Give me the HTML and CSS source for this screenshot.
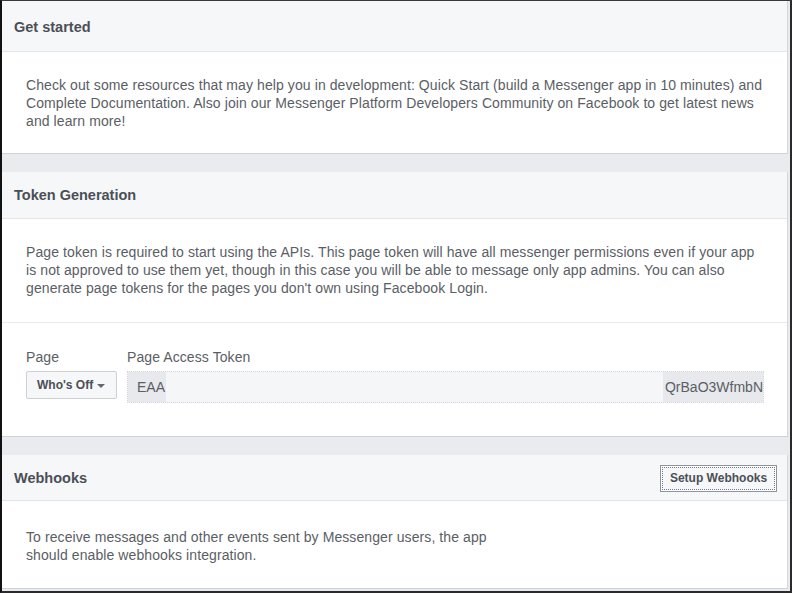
FILE: index.html
```html
<!DOCTYPE html>
<html>
<head>
<meta charset="utf-8">
<link rel="stylesheet" href="styles.css">
</head>
<body>
<div class="frame">
  <section class="card card-first">
    <div class="card-head head-first"><h2 class="card-title">Get started</h2></div>
    <div class="card-body">
      <p class="text">Check out some resources that may help you in development: Quick Start (build a Messenger app in 10 minutes) and Complete Documentation. Also join our Messenger Platform Developers Community on Facebook to get latest news and learn more!</p>
    </div>
  </section>
  <div class="spacer"></div>
  <section class="card">
    <div class="card-head head-second"><h2 class="card-title">Token Generation</h2></div>
    <div class="card-body body-token">
      <p class="text">Page token is required to start using the APIs. This page token will have all messenger permissions even if your app is not approved to use them yet, though in this case you will be able to message only app admins. You can also generate page tokens for the pages you don't own using Facebook Login.</p>
    </div>
    <div class="form-row">
      <div class="field field-page">
        <div class="label">Page</div>
        <button class="select">Who's Off <span class="caret"></span></button>
      </div>
      <div class="field field-token">
        <div class="label">Page Access Token</div>
        <div class="token">
          <span class="token-start">EAA</span>
          <span class="token-mid"></span>
          <span class="token-end">QrBaO3WfmbN</span>
        </div>
      </div>
    </div>
  </section>
  <div class="spacer"></div>
  <section class="card card-last">
    <div class="card-head head-third">
      <h2 class="card-title">Webhooks</h2>
      <button class="btn">Setup Webhooks</button>
    </div>
    <div class="card-body body-last">
      <p class="text">To receive messages and other events sent by Messenger users, the app<br>should enable webhooks integration.</p>
    </div>
  </section>
</div>
</body>
</html>
```
FILE: styles.css
```css
html, body {
  margin: 0;
  padding: 0;
  background: #ffffff;
}
.frame {
  width: 792px;
  height: 593px;
  box-sizing: border-box;
  border-left: 2px solid #111111;
  border-right: 2px solid #2a2a2a;
  border-top: 1px solid #3a3a3a;
  border-bottom: 2px solid #2a2a2a;
  background: #e9ebee;
  overflow: hidden;
  font-family: "Liberation Sans", Arial, sans-serif;
  display: flex;
  flex-direction: column;
}
.card {
  background: #ffffff;
  border-right: 1px solid #d3d6db;
  margin-right: 2px;
  border-bottom: 1px solid #cfd2d7;
}
.card-last {
  flex: 1;
  margin-bottom: 2px;
}
.card-head {
  background: #f6f7f9;
  border-bottom: 1px solid #e2e4e8;
  display: flex;
  align-items: center;
  justify-content: space-between;
  padding: 0 10px 0 12px;
  box-sizing: border-box;
}
.head-first { height: 51px; padding-top: 1px; }
.head-second { height: 47px; }
.head-third { height: 46px; }
.card-title {
  margin: 0;
  font-size: 14.5px;
  font-weight: bold;
  color: #4b4f56;
  line-height: 18px;
}
.card-body {
  padding: 24px 24px 23px 24px;
}
.body-token {
  padding-bottom: 25px;
}
.body-last {
  padding-top: 27px;
}
.text {
  margin: 0;
  font-size: 14px;
  letter-spacing: 0.09px;
  line-height: 18px;
  color: #5a5e65;
}
.spacer {
  height: 18px;
  flex: none;
}
.form-row {
  border-top: 1px solid #e9eaed;
  padding: 25px 23px 33px 24px;
  display: flex;
  gap: 10px;
}
.label {
  font-size: 14px;
  letter-spacing: 0.09px;
  line-height: 18px;
  color: #5a5e65;
  margin-bottom: 5px;
}
.select {
  height: 28px;
  width: 91px;
  box-sizing: border-box;
  background: #f6f7f9;
  border: 1px solid #ced0d4;
  border-radius: 2px;
  font-family: "Liberation Sans", Arial, sans-serif;
  font-size: 12px;
  font-weight: bold;
  color: #4b4f56;
  padding: 0 0 0 10px;
  display: flex;
  align-items: center;
  gap: 4px;
  text-align: left;
}
.caret {
  width: 0;
  height: 0;
  border-left: 4px solid transparent;
  border-right: 4px solid transparent;
  border-top: 4px solid #606770;
  margin-top: 1px;
}
.field-token {
  flex: 1;
}
.token {
  height: 32px;
  box-sizing: border-box;
  border: 1px dotted #d4d6da;
  background: #f3f4f6;
  display: flex;
  align-items: stretch;
  overflow: hidden;
  font-size: 14px;
  color: #5a5e65;
}
.token-start {
  background: #e8e9ec;
  padding-left: 9px;
  padding-right: 1px;
  display: flex;
  align-items: center;
  flex: none;
}
.token-mid {
  flex: 1;
  min-width: 0;
  background: #f5f6f7;
}
.token-end {
  flex: none;
  background: #e8e9ec;
  display: flex;
  align-items: center;
  padding: 0 0 0 2px;
  white-space: nowrap;
}
.btn {
  height: 27px;
  width: 117px;
  box-sizing: border-box;
  background: #f6f7f9;
  border: 1px solid #8d949e;
  box-shadow: inset 0 0 0 1px #ffffff;
  outline: 1px dotted #777b82;
  outline-offset: -3px;
  font-family: "Liberation Sans", Arial, sans-serif;
  font-size: 12px;
  font-weight: bold;
  color: #4b4f56;
  padding: 0;
  margin-top: 1px;
}
```
